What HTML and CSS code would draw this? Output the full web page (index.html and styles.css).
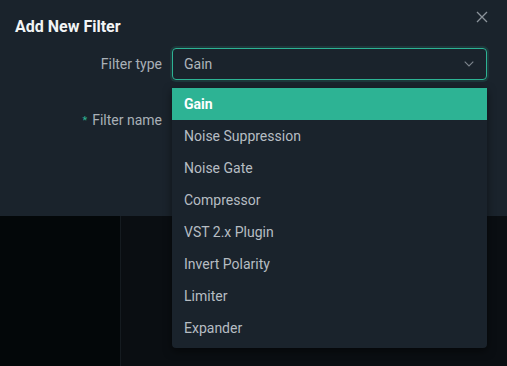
FILE: index.html
```html
<!DOCTYPE html>
<html>
	<head>
		<meta charset="UTF-8">
		<title>Add New Filter</title>
		<link rel="stylesheet" href="styles.css">
	</head>
	<body>
	<div class="page">
		<div class="dialog">
			<h2 class="title">Add New Filter</h2>
			<a class="close" href="javascript:;">
				<svg width="12" height="12" viewBox="0 0 12 12"><path d="M1 1L11 11M11 1L1 11" stroke="#8b939b" stroke-width="1.3" fill="none"/></svg>
			</a>
			<div class="row">
				<label class="label">Filter type</label>
				<div class="select">
					<span>Gain</span>
					<svg width="10" height="6" viewBox="0 0 10 6"><path d="M0.7 0.7L5 5L9.3 0.7" stroke="#7d858d" stroke-width="1.1" fill="none"/></svg>
				</div>
			</div>
			<div class="row">
				<label class="label"><i class="req">*</i>Filter name</label>
				<div class="input"></div>
			</div>
		</div>
		<div class="behind">
			<div class="side"></div>
			<div class="main"></div>
		</div>
		<ul class="menu">
			<li class="active">Gain</li>
			<li>Noise Suppression</li>
			<li>Noise Gate</li>
			<li>Compressor</li>
			<li>VST 2.x Plugin</li>
			<li>Invert Polarity</li>
			<li>Limiter</li>
			<li>Expander</li>
		</ul>
	</div>
	</body>
</html>
```

FILE: styles.css
```css
*{
	padding: 0px;
	margin: 0px;
}
body{
	background: #0a0e12;
	font-family: Roboto, "Liberation Sans", sans-serif;
	overflow: hidden;
}
a{
	text-decoration: none;
}
.page{
	position: relative;
	width: 507px;
	height: 366px;
}
.dialog{
	height: 216px;
	background: #1a232c;
	padding: 15px 20px 0 15px;
	box-sizing: border-box;
	position: relative;
}
.title{
	font-size: 16px;
	font-weight: 700;
	line-height: 24px;
	color: #f2f4f5;
	margin-bottom: 9px;
}
.close{
	position: absolute;
	right: 19px;
	top: 11px;
	display: block;
	width: 12px;
	height: 12px;
}
.close svg{
	display: block;
}
.row{
	display: flex;
	align-items: center;
	height: 32px;
	margin-bottom: 24px;
}
.label{
	width: 147px;
	margin-right: 10px;
	text-align: right;
	font-size: 14px;
	color: #a9b0b7;
}
.req{
	font-style: normal;
	color: #2db394;
	font-size: 11px;
	margin-right: 5px;
	position: relative;
	top: -1px;
}
.select{
	flex: 1;
	height: 32px;
	box-sizing: border-box;
	border: 1px solid #2db394;
	border-radius: 4px;
	box-shadow: 0 0 0 2px rgba(45,179,148,0.15);
	display: flex;
	align-items: center;
	justify-content: space-between;
	padding: 0 12px 0 11px;
	font-size: 14px;
	color: #aeb5bb;
}
.input{
	flex: 1;
	height: 32px;
}
.behind{
	display: flex;
	height: 150px;
}
.side{
	width: 120px;
	background: #030709;
	border-right: 1px solid #151b20;
}
.main{
	flex: 1;
	background: #0a0e12;
}
.menu{
	position: absolute;
	left: 172px;
	top: 88px;
	width: 315px;
	list-style: none;
	background: #1a232c;
	border-radius: 0 0 4px 4px;
	padding-bottom: 4px;
	box-shadow: 0 3px 8px rgba(0,0,0,0.5);
}
.menu li{
	height: 32px;
	line-height: 32px;
	padding: 0 12px;
	font-size: 14px;
	color: #b6bdc3;
}
.menu li.active{
	background: #2db394;
	color: #fff;
	font-weight: 700;
}
```
